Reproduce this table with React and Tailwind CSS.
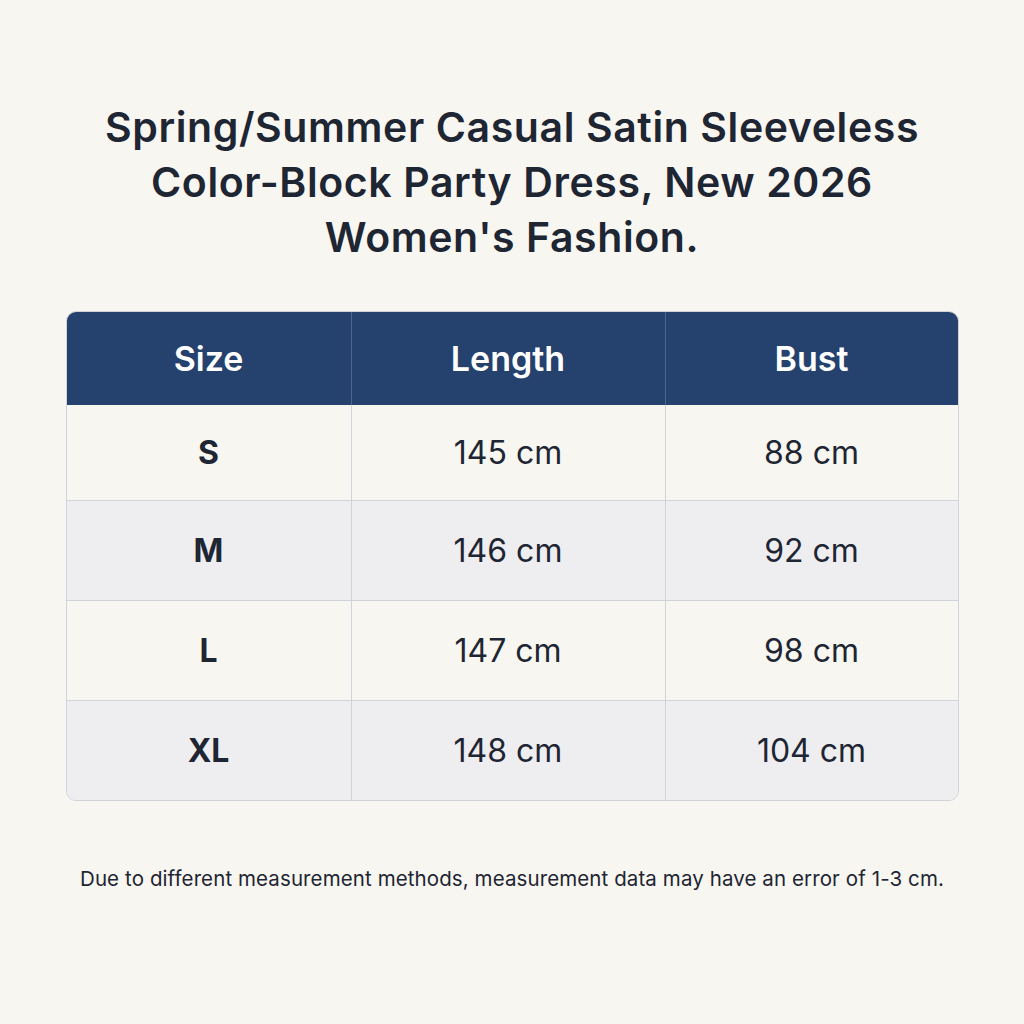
const rows = [
  { size: 'S', length: '145 cm', bust: '88 cm' },
  { size: 'M', length: '146 cm', bust: '92 cm' },
  { size: 'L', length: '147 cm', bust: '98 cm' },
  { size: 'XL', length: '148 cm', bust: '104 cm' },
];

export default function App() {
  return (
    <div
      className="w-[1024px] h-[1024px] bg-[#f8f6f1] text-[#1e2533] flex flex-col items-center"
      style={{ fontFamily: 'Inter, "Noto Sans", sans-serif' }}
    >
      <h1 className="mt-[100px] text-[41px] leading-[55px] font-semibold text-center tracking-[0.6px]">
        Spring/Summer Casual Satin Sleeveless
        <br />
        Color-Block Party Dress, New 2026
        <br />
        Women's Fashion.
      </h1>

      <div className="mt-[46px] w-[893px] rounded-[10px] overflow-hidden border border-[#cfd3da]">
        <div className="grid grid-cols-[285px_314px_1fr] bg-[#25416d] text-white text-[34px] font-semibold h-[93px]">
          <div className="flex items-center justify-center border-r border-[#4a6590]">Size</div>
          <div className="flex items-center justify-center border-r border-[#4a6590]">Length</div>
          <div className="flex items-center justify-center">Bust</div>
        </div>
        {rows.map((r, i) => (
          <div
            key={r.size}
            className={`grid grid-cols-[285px_314px_1fr] text-[32px] ${i === 0 ? 'h-[95px]' : 'h-[100px] border-t border-[#cfd3da]'} ${i % 2 ? 'bg-[#eeeef1]' : 'bg-[#f8f6f1]'}`}
          >
            <div className="flex items-center justify-center border-r border-[#cfd3da] font-bold">{r.size}</div>
            <div className="flex items-center justify-center border-r border-[#cfd3da]">{r.length}</div>
            <div className="flex items-center justify-center">{r.bust}</div>
          </div>
        ))}
      </div>

      <p className="mt-[63px] text-[20.5px] tracking-[0.1px] text-[#1e2533]">
        Due to different measurement methods, measurement data may have an error of 1-3 cm.
      </p>
    </div>
  );
}
